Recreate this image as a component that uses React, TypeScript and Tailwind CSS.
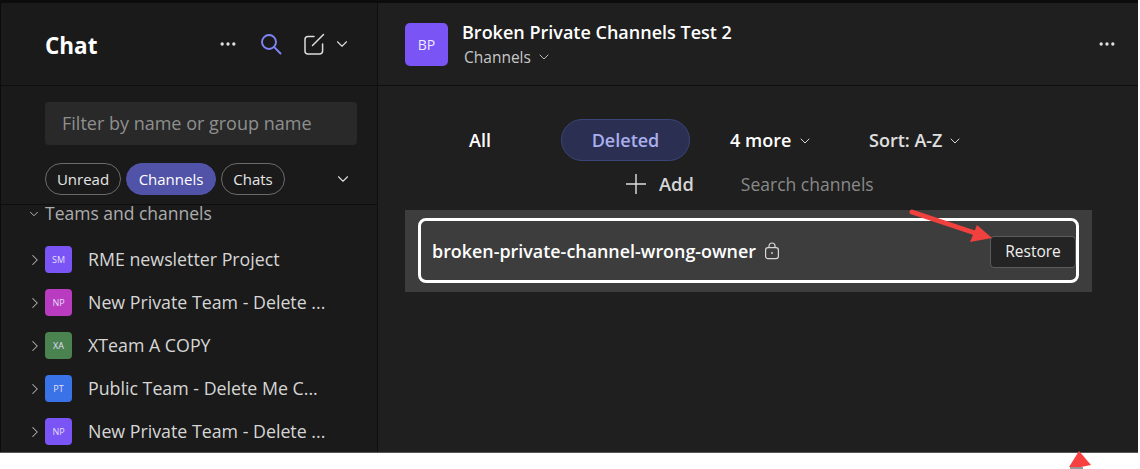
import React from "react";
import { ChevronDown, ChevronRight, MoreHorizontal } from "lucide-react";

const teams = [
  { i: "SM", n: "RME newsletter Project", c: "bg-[#7a54f5]" },
  { i: "NP", n: "New Private Team - Delete ...", c: "bg-[#b83bc0]" },
  { i: "XA", n: "XTeam A COPY", c: "bg-[#4a8250]" },
  { i: "PT", n: "Public Team - Delete Me C...", c: "bg-[#3a72e8]" },
  { i: "NP", n: "New Private Team - Delete ...", c: "bg-[#7a54f5]" },
];

function Chip({ label, active, w }: { label: string; active?: boolean; w: string }) {
  return (
    <div
      className={
        "h-[32px] flex items-center justify-center rounded-full text-[15px] text-[#e6e6e6] border " +
        w +
        " " +
        (active ? "bg-[#5153a8] border-[#5153a8] text-white" : "border-[#6b6b6b]")
      }
    >
      {label}
    </div>
  );
}

export default function App() {
  return (
    <div className="relative w-[1140px] h-[469px] bg-white overflow-hidden font-['Open_Sans','Noto_Sans',sans-serif]">
      <div className="w-[1138px] h-[453px] bg-[#0c0c0c] pt-[3px] pl-[1px] flex flex-col border-b border-[#555]">
        <div className="flex-1 flex min-h-0">
          {/* sidebar */}
          <div className="w-[377px] shrink-0 bg-[#1a1a1a] flex flex-col border-r border-[#0e0e0e] overflow-hidden">
            <div className="h-[83px] shrink-0 flex items-center border-b border-[#0e0e0e] pl-[44px] pr-[26px]">
              <div className="text-[22.5px] font-bold text-white flex-1 leading-none mt-[5px]">Chat</div>
              <MoreHorizontal size={20} strokeWidth={2} className="text-[#e0e0e0] mr-[22px]" />
              <svg width="22" height="22" viewBox="0 0 22 22" fill="none" stroke="#7f85f5" strokeWidth="1.9" strokeLinecap="round" className="mr-[21px]">
                <circle cx="9" cy="9" r="7" />
                <path d="M14.2 14.2 20.5 20.5" />
              </svg>
              <svg width="22" height="22" viewBox="0 0 22 22" fill="none" stroke="#dcdcdc" strokeWidth="1.5" strokeLinecap="round" className="mr-[8px]">
                <path d="M11 3.5H5A3 3 0 0 0 2 6.5V18a3 3 0 0 0 3 3h12a3 3 0 0 0 2.6-3V11" />
                <path d="M9.5 12.5 20.5 1.5" />
              </svg>
              <ChevronDown size={18} strokeWidth={1.5} className="text-[#dcdcdc]" />
            </div>
            <div className="h-[119px] shrink-0 border-b border-[#0e0e0e] pl-[44px] pr-[20px] pt-[16px]">
              <div className="h-[43px] w-[312px] rounded-[4px] bg-[#292929] flex items-center pl-[17px] text-[18px] text-[#8f8f8f]">
                Filter by name or group name
              </div>
              <div className="flex items-center gap-[5px] mt-[18px]">
                <Chip label="Unread" w="w-[76px]" />
                <Chip label="Channels" w="w-[90px]" active />
                <Chip label="Chats" w="w-[64px]" />
                <ChevronDown size={18} strokeWidth={1.5} className="text-[#dcdcdc] ml-auto mr-[5px]" />
              </div>
            </div>
            <div className="flex items-center pl-[26px] h-[17px] text-[17.5px] text-[#adadad]">
              <ChevronDown size={14} strokeWidth={1.5} className="mr-[4px] text-[#c8c8c8]" />
              <span className="leading-none">Teams and channels</span>
            </div>
            <div className="flex flex-col gap-[16px] mt-[24px]">
              {teams.map((t, k) => (
                <div key={k} className="flex items-center h-[27px] pl-[25px]">
                  <ChevronRight size={18} strokeWidth={1.4} className="text-[#b5b5b5] mr-[1px]" />
                  <div className={"w-[27px] h-[27px] rounded-[4px] flex items-center justify-center text-[9px] text-[#e5defc] " + t.c}>
                    {t.i}
                  </div>
                  <div className="ml-[16px] text-[17.8px] text-[#d6d6d6] whitespace-nowrap">{t.n}</div>
                </div>
              ))}
            </div>
          </div>
          {/* main */}
          <div className="flex-1 bg-[#1f1f1f] flex flex-col min-w-0">
            <div className="h-[83px] shrink-0 border-b border-[#0e0e0e] flex items-center pl-[27px] pr-[21px]">
              <div className="w-[43px] h-[43px] rounded-[5px] bg-[#7a54f5] flex items-center justify-center text-[14px] text-[#efeaff]">BP</div>
              <div className="ml-[14px] flex-1">
                <div className="text-[18px] font-semibold text-white leading-[24px]">Broken Private Channels Test 2</div>
                <div className="flex items-center ml-[2px] mt-[2px] text-[15.5px] text-[#c8c8c8] leading-[22px]">
                  Channels
                  <ChevronDown size={16} strokeWidth={1.4} className="ml-[5px]" />
                </div>
              </div>
              <MoreHorizontal size={20} strokeWidth={2} className="text-[#e0e0e0]" />
            </div>
            <div className="flex items-center h-[42px] mt-[33px] pl-[91px] text-[18px] font-semibold text-white">
              <span className="w-[92px] mt-[1px]">All</span>
              <div className="w-[129px] h-[42px] rounded-full bg-[#2b2f52] border border-[#3a4578] flex items-center justify-center text-[#a9afee] pt-[1px]">Deleted</div>
              <div className="ml-[40px] flex items-center w-[139px] mt-[1px]">
                4 more
                <ChevronDown size={16} strokeWidth={1.5} className="ml-[6px] text-[#d6d6d6]" />
              </div>
              <div className="flex items-center font-semibold text-[#e0e0e0] mt-[1px]">
                Sort: A-Z
                <ChevronDown size={16} strokeWidth={1.5} className="ml-[5px] text-[#d6d6d6]" />
              </div>
            </div>
            <div className="flex items-center h-[24px] mt-[11px] pl-[248px]">
              <svg width="20" height="20" viewBox="0 0 20 20" stroke="#e0e0e0" strokeWidth="1.4" className="shrink-0">
                <path d="M10 0V20M0 10H20" />
              </svg>
              <span className="ml-[13px] text-[18.3px] font-semibold text-[#d6d6d6]">Add</span>
              <span className="ml-[47px] text-[17.5px] text-[#8a8a8a]">Search channels</span>
            </div>
            <div className="ml-[27px] mt-[14px] w-[687px] h-[82px] bg-[#3d3d3d] px-[13px] py-[8px]">
              <div className="h-[65px] rounded-[8px] border-[3px] border-white flex items-center pl-[11px]">
                <span className="text-[17.9px] font-semibold text-white whitespace-nowrap mt-[1px]">broken-private-channel-wrong-owner</span>
                <svg width="16" height="18" viewBox="0 0 16 18" fill="none" className="ml-[8px] text-[#d8d8d8]" stroke="currentColor" strokeWidth="1.2">
                  <rect x="1.6" y="5.6" width="12.8" height="11" rx="2.4" />
                  <path d="M5 5.6V4a3 3 0 0 1 6 0v1.6" />
                  <circle cx="8" cy="11" r="0.9" fill="currentColor" stroke="none" />
                </svg>
                <div className="ml-auto w-[86px] h-[32px] rounded-[4px] bg-[#242424] border border-[#5c5c5c] flex items-center justify-center text-[15.5px] text-[#f0f0f0] mt-[2px]">Restore</div>
              </div>
            </div>
          </div>
        </div>
      </div>
      {/* annotation arrow */}
      <svg className="absolute left-[905px] top-[205px]" width="90" height="40" viewBox="0 0 90 40" fill="none">
        <path d="M7 7 L70 28" stroke="#f0413f" strokeWidth="5" strokeLinecap="round" />
        <path d="M87 33 L65 37 L72 20 Z" fill="#f0413f" />
      </svg>
      <svg className="absolute left-[1068px] top-[451px]" width="24" height="18" viewBox="0 0 24 18">
        <path d="M11 0 L1 16 L13 16 L23 14 Z" fill="#f84040" />
        <rect x="2" y="16" width="13" height="2" fill="#999" />
      </svg>
    </div>
  );
}
